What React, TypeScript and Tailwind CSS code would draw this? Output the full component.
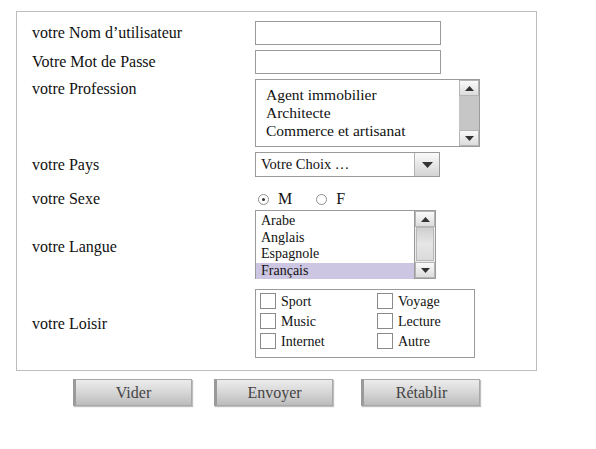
function Arrow({ up }: { up?: boolean }) {
  return (
    <svg width="9" height="5" viewBox="0 0 9 5">
      <path d={up ? "M0 5 L4.5 0 L9 5 Z" : "M0 0 L4.5 5 L9 0 Z"} fill="#333" />
    </svg>
  );
}

function ScrollBtn({ up }: { up?: boolean }) {
  return (
    <div className="h-[16px] flex items-center justify-center border border-[#b5b5b5] bg-gradient-to-b from-[#fafafa] to-[#dcdcdc]">
      <Arrow up={up} />
    </div>
  );
}

function Label({ children, className = "" }: { children: React.ReactNode; className?: string }) {
  return <div className={`w-[223px] shrink-0 text-[16px] leading-[20px] text-[#111] ${className}`}>{children}</div>;
}

function Check({ label }: { label: string }) {
  return (
    <div className="flex items-center gap-[5px] h-[20px]">
      <span className="w-[16px] h-[16px] border border-[#8a8a8a] bg-white" />
      <span className="text-[14px] text-[#111]">{label}</span>
    </div>
  );
}

function Radio({ checked, label }: { checked?: boolean; label: string }) {
  return (
    <div className="flex items-center gap-[9px]">
      <span className="w-[11px] h-[11px] rounded-full border border-[#8f8f8f] bg-white flex items-center justify-center">
        {checked && <span className="w-[3px] h-[3px] rounded-full bg-[#333]" />}
      </span>
      <span className="text-[16px] text-[#111] leading-none">{label}</span>
    </div>
  );
}

function Button({ label }: { label: string }) {
  return (
    <div className="w-[119px] h-[27px] flex items-center justify-center border border-[#a8a8a8] border-l-[3px] border-l-[#9a9a9a] bg-gradient-to-b from-[#ececec] via-[#d6d6d6] to-[#bcbcbc] shadow-[1px_1px_1px_rgba(0,0,0,0.25)] text-[16px] text-[#444]">
      {label}
    </div>
  );
}

export default function App() {
  return (
    <div className="w-[596px] h-[449px] bg-white [font-family:Liberation_Serif,serif]">
      <div className="ml-[16px] pt-[11px]">
        <div className="w-[521px] h-[360px] border border-[#bdbdbd] pl-[15px] pt-[9px]">
          <div className="flex items-center h-[24px]">
            <Label>votre Nom d’utilisateur</Label>
            <div className="w-[186px] h-[24px] border border-[#9a9a9a] bg-white" />
          </div>
          <div className="flex items-center h-[24px] mt-[5px]">
            <Label>Votre Mot de Passe</Label>
            <div className="w-[186px] h-[24px] border border-[#9a9a9a] bg-white" />
          </div>
          <div className="flex mt-[5px]">
            <Label>votre Profession</Label>
            <div className="w-[225px] h-[68px] border border-[#9a9a9a] bg-white flex">
              <div className="flex-1 pl-[10px] pt-[6px] text-[15.5px] leading-[18px] text-[#111]">
                <div>Agent immobilier</div>
                <div>Architecte</div>
                <div>Commerce et artisanat</div>
              </div>
              <div className="w-[20px] flex flex-col">
                <ScrollBtn up />
                <div className="flex-1 bg-[#c6c6c6]" />
                <ScrollBtn />
              </div>
            </div>
          </div>
          <div className="flex items-center mt-[5px]">
            <Label>votre Pays</Label>
            <div className="w-[185px] h-[25px] border border-[#9a9a9a] bg-white flex">
              <div className="flex-1 pl-[5px] text-[14.5px] leading-[23px] text-[#111]">Votre Choix …</div>
              <div className="w-[25px] flex items-center justify-center border-l border-[#b5b5b5] bg-gradient-to-b from-[#fafafa] to-[#d4d4d4]">
                <svg width="11" height="6" viewBox="0 0 11 6">
                  <path d="M0 0 L5.5 6 L11 0 Z" fill="#333" />
                </svg>
              </div>
            </div>
          </div>
          <div className="flex items-center h-[33px] pt-[11px]">
            <Label>votre Sexe</Label>
            <div className="flex items-center gap-[24px] pl-[3px]">
              <Radio checked label="M" />
              <Radio label="F" />
            </div>
          </div>
          <div className="flex items-center">
            <Label className="pt-[5px]">votre Langue</Label>
            <div className="w-[181px] h-[69px] border border-[#9a9a9a] bg-white flex">
              <div className="flex-1 pt-[2px] text-[14px] leading-[16.5px] text-[#111]">
                <div className="pl-[5px]">Arabe</div>
                <div className="pl-[5px]">Anglais</div>
                <div className="pl-[5px]">Espagnole</div>
                <div className="pl-[5px] bg-[#cdc6e2]">Français</div>
              </div>
              <div className="w-[21px] flex flex-col border-l border-[#9a9a9a]">
                <ScrollBtn up />
                <div className="flex-1 flex flex-col bg-[#ececec]">
                  <div className="h-[34px] mx-[1px] border border-[#b8b8b8] bg-gradient-to-b from-[#cfcfcf] via-[#e6e6e6] to-[#dadada]" />
                </div>
                <ScrollBtn />
              </div>
            </div>
          </div>
          <div className="flex items-center mt-[10px]">
            <Label>votre Loisir</Label>
            <div className="w-[220px] h-[69px] border border-[#9a9a9a] bg-white pl-[4px] pt-[1px] grid grid-cols-[117px_1fr]">
              <div>
                <Check label="Sport" />
                <Check label="Music" />
                <Check label="Internet" />
              </div>
              <div>
                <Check label="Voyage" />
                <Check label="Lecture" />
                <Check label="Autre" />
              </div>
            </div>
          </div>
        </div>
      </div>
      <div className="flex gap-[22px] pl-[73px] mt-[8px]">
        <Button label="Vider" />
        <Button label="Envoyer" />
        <div className="ml-[6px]">
          <Button label="Rétablir" />
        </div>
      </div>
    </div>
  );
}
